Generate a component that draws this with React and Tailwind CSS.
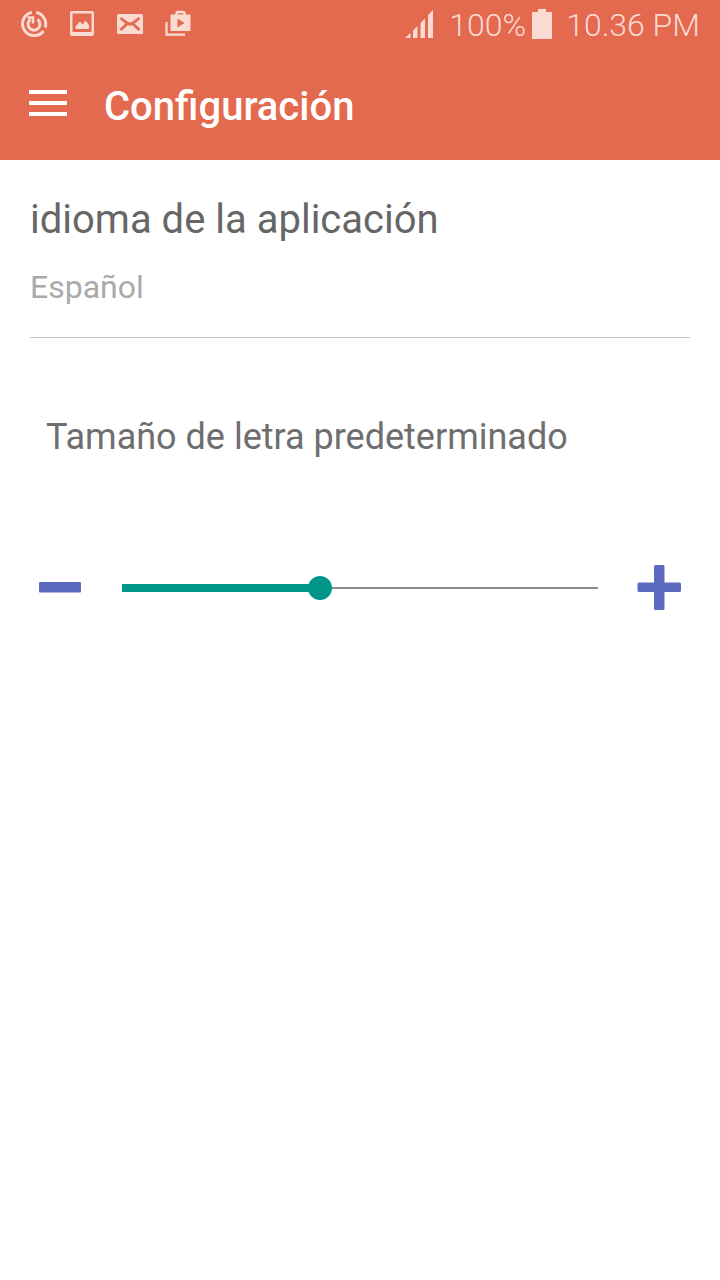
import { useState } from 'react'

const MAX_SIZE = 12

// Small notification glyphs on the left of the status bar, 28px each.
function SyncIcon() {
  return (
    <svg width="28" height="28" viewBox="0 0 28 28" fill="none" stroke="currentColor" aria-hidden="true">
      <path d="M12 2.4A11.700 11.700 0 1 0 23.500 21" strokeWidth="3" />
      <path d="M16.200 2.500A11.700 11.700 0 0 1 25.200 17.500" strokeWidth="3" />
      <path d="M17.500 9.300A6 6 0 1 1 10.500 9.300" strokeWidth="3" />
      <path d="M7.500 7.500h5.500v6" strokeWidth="2.600" />
    </svg>
  )
}

function PictureIcon() {
  return (
    <svg width="28" height="28" viewBox="0 0 28 28" aria-hidden="true">
      <path
        fill="currentColor"
        fillRule="evenodd"
        d="M4 1h20a2 2 0 0 1 2 2v21a2 2 0 0 1-2 2H4a2 2 0 0 1-2-2V3a2 2 0 0 1 2-2zM4.500 3.500v18.500h19V3.500z"
      />
      <path fill="currentColor" d="M7.500 19v-2.500l4.500-5 2.500 3 3-4 3.500 4.500v4z" />
    </svg>
  )
}

function MailIcon() {
  return (
    <svg width="28" height="28" viewBox="0 0 28 28" aria-hidden="true">
      <rect x="1" y="4" width="26" height="20" rx="1.500" fill="currentColor" />
      <path
        d="M4.500 8l6.500 5q3 2 6 0l6.500-5M4.500 20l6.500-6M23.500 20L17 14"
        fill="none"
        stroke="#e3694f"
        strokeWidth="2.800"
      />
    </svg>
  )
}

function PlayStoreIcon() {
  return (
    <svg width="28" height="28" viewBox="0 0 28 28" aria-hidden="true">
      <path d="M2.500 12v12.700H21" fill="none" stroke="currentColor" strokeWidth="2.200" />
      <path d="M12.500 5V3.500a1.500 1.500 0 0 1 1.500-1.500h5a1.500 1.500 0 0 1 1.500 1.500V5" fill="none" stroke="currentColor" strokeWidth="2.400" />
      <path fill="currentColor" fillRule="evenodd" d="M6.500 4.500h20v16.500h-20zM13.500 8.500v9l7-4.500z" />
    </svg>
  )
}

function SignalIcon() {
  return (
    <svg width="28" height="28" viewBox="0 0 28 28" fill="currentColor" aria-hidden="true">
      <path d="M0 28l5.500-5v5zM8 20.500l4.500-4.500v12H8zM15.500 13l4.500-4.500V28h-4.500zM23 5l5-5v28h-5z" />
    </svg>
  )
}

function BatteryIcon() {
  return (
    <svg width="20" height="30" viewBox="0 0 20 30" fill="currentColor" aria-hidden="true">
      <path d="M6 0h8v3h6v27H0V3h6z" />
    </svg>
  )
}

function StatusBar() {
  return (
    <div className="flex h-12 items-center justify-between px-5 text-[#fbdad2]">
      <div className="flex gap-5">
        <SyncIcon />
        <PictureIcon />
        <MailIcon />
        <PlayStoreIcon />
      </div>
      <div className="flex items-center text-[32px] leading-[48px] font-light">
        <SignalIcon />
        <span className="ml-4 pt-0.5">100%</span>
        <span className="ml-1.5">
          <BatteryIcon />
        </span>
        <span className="ml-3.5 pt-0.5">10.36 PM</span>
      </div>
    </div>
  )
}

function AppBar() {
  return (
    <div className="flex h-28 items-center px-7">
      <button type="button" aria-label="Menú" className="w-10">
        <svg width="40" height="28" viewBox="0 0 40 28" fill="#ffffff" aria-hidden="true">
          <path d="M1 0h38v4H1zM1 11h38v4H1zM1 22h38v4H1z" />
        </svg>
      </button>
      <h1 className="ml-9 pt-1.5 text-[40px] leading-[48px] font-medium text-white">Configuración</h1>
    </div>
  )
}

function SizeSlider({ value, onChange }) {
  const percent = (value / MAX_SIZE) * 100
  return (
    <div className="grid h-6 flex-1 items-center">
      {/* the 12px side padding is half the thumb, so the fill ends at its centre */}
      <div className="col-start-1 row-start-1 px-3">
        <div className="flex h-2 items-center">
          <div className="h-2 bg-[#009688]" style={{ width: `${percent}%` }} />
          <div className="h-0.5 flex-1 bg-[#8c8c8c]" />
        </div>
      </div>
      <input
        id="font-size"
        type="range"
        min="0"
        max={MAX_SIZE}
        value={value}
        onChange={(e) => onChange(Number(e.target.value))}
        className="col-start-1 row-start-1 h-6 w-full appearance-none bg-transparent [&::-webkit-slider-thumb]:size-6 [&::-webkit-slider-thumb]:appearance-none [&::-webkit-slider-thumb]:rounded-full [&::-webkit-slider-thumb]:bg-[#009688]"
      />
    </div>
  )
}

export default function App() {
  const [size, setSize] = useState(5)
  const step = (d) => setSize((s) => Math.min(MAX_SIZE, Math.max(0, s + d)))

  return (
    <div className="min-h-screen bg-white font-['Roboto',sans-serif]">
      <header className="bg-[#e3694f]">
        <StatusBar />
        <AppBar />
      </header>

      <main className="px-[30px] pt-9">
        <button type="button" className="flex w-full flex-col gap-[23px] border-b border-[#c4c4c4] pb-[30px] text-left">
          <span className="text-[40px] leading-[48px] text-[#666666]">idioma de la aplicación</span>
          <span className="text-[32px] leading-[40px] text-[#aaaaaa]">Español</span>
        </button>

        <section className="pt-[77px]">
          <label htmlFor="font-size" className="block px-4 text-[36px] leading-[44px] text-[#6e6e6e]">
            Tamaño de letra predeterminado
          </label>
          <div className="mt-[99px] flex items-center gap-5">
            <button type="button" aria-label="Reducir" onClick={() => step(-1)} className="size-[60px]">
              <svg width="60" height="60" viewBox="0 0 60 60" fill="#5c6bc0" aria-hidden="true">
                <rect x="9" y="24" width="42" height="10.500" rx="1" />
              </svg>
            </button>
            <SizeSlider value={size} onChange={setSize} />
            <button type="button" aria-label="Aumentar" onClick={() => step(1)} className="size-[60px]">
              <svg width="60" height="60" viewBox="0 0 60 60" fill="#5c6bc0" aria-hidden="true">
                <rect x="7.500" y="24.500" width="43.500" height="9.500" rx="1.500" />
                <rect x="24" y="7" width="10.500" height="45" rx="1.500" />
              </svg>
            </button>
          </div>
        </section>
      </main>
    </div>
  )
}
